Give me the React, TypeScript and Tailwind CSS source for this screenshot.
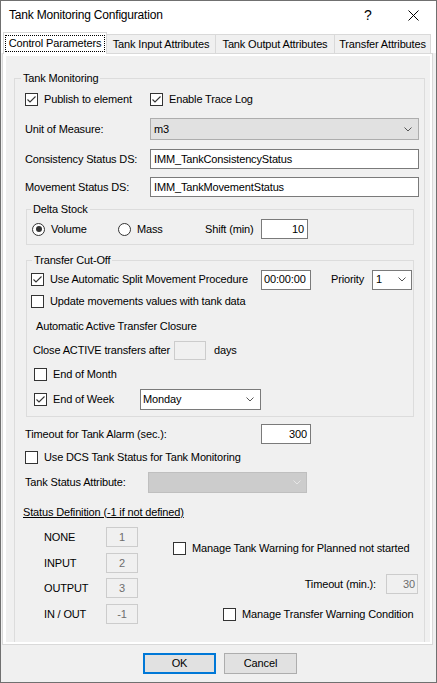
import type { ReactNode } from 'react'

type BoxProps = { checked?: boolean }

function CheckBox({ checked = false }: BoxProps) {
  return (
    <span className="flex h-[13px] w-[13px] shrink-0 items-center justify-center border border-[#333333] bg-white">
      {checked && (
        <svg width="11" height="11" viewBox="0 0 11 11" fill="none">
          <polyline points="1.5,5.5 4,8 9.5,2.5" stroke="#333333" strokeWidth="1.1" />
        </svg>
      )}
    </span>
  )
}

function RadioButton({ checked = false }: BoxProps) {
  return (
    <span className="flex h-[13px] w-[13px] shrink-0 items-center justify-center rounded-full border border-[#333333] bg-white">
      {checked && <span className="h-[6px] w-[6px] rounded-full bg-[#333333]" />}
    </span>
  )
}

function Chevron({ color = '#555555' }: { color?: string }) {
  return (
    <svg width="8" height="5" viewBox="0 0 8 5" fill="none">
      <polyline points="0.5,0.5 4,4 7.5,0.5" stroke={color} strokeWidth="1" />
    </svg>
  )
}

function Tab({ width, children }: { width: string; children: ReactNode }) {
  return (
    <div
      className={`-ml-px flex h-[19px] items-center justify-center border border-b-0 border-[#d9d9d9] bg-[#f0f0f0] ${width}`}
    >
      {children}
    </div>
  )
}

// disabled value boxes of the status definition block
function StatusRow({ label, value, top }: { label: string; value: string; top: string }) {
  return (
    <div className={`flex h-[20px] items-center ${top}`}>
      <span className="ml-[19px] w-[62px]">{label}</span>
      <div className="flex h-[20px] w-[32px] items-center justify-center border border-[#cccccc] bg-[#f0f0f0] text-[#6d6d6d]">
        {value}
      </div>
    </div>
  )
}

export default function App() {
  return (
    <div className="flex h-[683px] w-[437px] flex-col overflow-hidden border border-[#707070] bg-[#f0f0f0] font-['Liberation_Sans',Arial,sans-serif] text-[11px] leading-[13px] tracking-[-0.15px] text-black">
      {/* title bar */}
      <div className="flex h-[29px] shrink-0 items-center bg-white">
        <span className="pl-[8px] text-[12px] leading-[15px] tracking-[-0.2px]">Tank Monitoring Configuration</span>
        <span className="ml-auto flex h-full w-[46px] items-center justify-center text-[14px] tracking-normal">?</span>
        <span className="flex h-full w-[45px] items-center justify-center">
          <svg width="11" height="11" viewBox="0 0 11 11" fill="none">
            <path d="M0.5 0.5L10.5 10.5M10.5 0.5L0.5 10.5" stroke="#000000" strokeWidth="1" />
          </svg>
        </span>
      </div>

      {/* tabs */}
      <div className="flex h-[23px] shrink-0 items-end bg-white pl-[2px]">
        <div className="relative z-10 -mb-px flex h-[22px] w-[104px] border border-b-0 border-[#d9d9d9] bg-white px-[1px] py-[2px]">
          <div className="flex flex-1 items-center justify-center border border-dotted border-black">Control Parameters</div>
        </div>
        <Tab width="w-[110px]">Tank Input Attributes</Tab>
        <Tab width="w-[120px]">Tank Output Attributes</Tab>
        <Tab width="w-[97px]">Transfer Attributes</Tab>
      </div>

      {/* tab page */}
      <div className="ml-px h-[592px] w-[431px] shrink-0 border border-[#d9d9d9]">
        <div className="h-full overflow-hidden border-y-2 border-l-[3px] border-r-2 border-white bg-[#f0f0f0]">
          <fieldset className="ml-[8px] mt-[16px] w-[411px] border border-[#dcdcdc] pb-[30px]">
            <legend className="ml-[6px] px-[2px] leading-[13px]">Tank Monitoring</legend>
            <div className="pl-[10px]">
              <div className="mt-[8px] flex h-[13px] items-center">
                <div className="flex w-[125px] items-center gap-[6px]">
                  <CheckBox checked />
                  <span>Publish to element</span>
                </div>
                <div className="flex items-center gap-[6px]">
                  <CheckBox checked />
                  <span>Enable Trace Log</span>
                </div>
              </div>

              <div className="mt-[12px] flex h-[22px] items-center">
                <span className="w-[125px]">Unit of Measure:</span>
                <div className="flex h-[22px] w-[269px] items-center justify-between border border-[#adadad] bg-[#e1e1e1] pl-[3px] pr-[6px]">
                  <span>m3</span>
                  <Chevron />
                </div>
              </div>

              <div className="mt-[9px] flex h-[20px] items-center">
                <span className="w-[125px]">Consistency Status DS:</span>
                <div className="flex h-[20px] w-[269px] items-center border border-[#7a7a7a] bg-white pl-[3px]">
                  IMM_TankConsistencyStatus
                </div>
              </div>

              <div className="mt-[8px] flex h-[20px] items-center">
                <span className="w-[125px]">Movement Status DS:</span>
                <div className="flex h-[20px] w-[269px] items-center border border-[#7a7a7a] bg-white pl-[3px]">
                  IMM_TankMovementStatus
                </div>
              </div>

              <fieldset className="ml-px mt-[6px] w-[388px] border border-[#dcdcdc] pb-[5px]">
                <legend className="ml-[4px] px-[2px] leading-[13px]">Delta Stock</legend>
                <div className="mt-[3px] flex h-[20px] items-center pl-[5px]">
                  <div className="flex w-[86px] items-center gap-[6px]">
                    <RadioButton checked />
                    <span>Volume</span>
                  </div>
                  <div className="flex w-[87px] items-center gap-[6px]">
                    <RadioButton />
                    <span>Mass</span>
                  </div>
                  <span className="w-[56px]">Shift (min)</span>
                  <div className="flex h-[20px] w-[47px] items-center justify-end border border-[#7a7a7a] bg-white pr-[3px]">
                    10
                  </div>
                </div>
              </fieldset>

              <fieldset className="ml-px mt-[9px] w-[388px] border border-[#dcdcdc] pb-[6px]">
                <legend className="ml-[5px] px-[2px] leading-[13px]">Transfer Cut-Off</legend>
                <div className="pl-[4px]">
                  <div className="mt-[2px] flex h-[21px] items-center">
                    <div className="flex w-[230px] items-center gap-[6px]">
                      <CheckBox checked />
                      <span>Use Automatic Split Movement Procedure</span>
                    </div>
                    <div className="flex h-[20px] w-[50px] items-center border border-[#7a7a7a] bg-white pl-[2px]">
                      00:00:00
                    </div>
                    <span className="ml-[20px] w-[41px]">Priority</span>
                    <div className="flex h-[20px] w-[40px] items-center justify-between border border-[#7a7a7a] bg-white pl-[3px] pr-[5px]">
                      <span>1</span>
                      <Chevron />
                    </div>
                  </div>

                  <div className="mt-[5px] flex h-[13px] items-center gap-[6px]">
                    <CheckBox />
                    <span>Update movements values with tank data</span>
                  </div>

                  <div className="ml-[5px] mt-[12px] flex h-[13px] items-center">Automatic Active Transfer Closure</div>

                  <div className="ml-[2px] mt-[8px] flex h-[19px] items-center">
                    <span className="w-[141px]">Close ACTIVE transfers after</span>
                    <div className="h-[19px] w-[32px] border border-[#cccccc] bg-[#f0f0f0]" />
                    <span className="ml-[8px]">days</span>
                  </div>

                  <div className="ml-[3px] mt-[8px] flex h-[13px] items-center gap-[6px]">
                    <CheckBox />
                    <span>End of Month</span>
                  </div>

                  <div className="ml-[3px] mt-[8px] flex h-[21px] items-center">
                    <div className="flex w-[106px] items-center gap-[6px]">
                      <CheckBox checked />
                      <span>End of Week</span>
                    </div>
                    <div className="flex h-[21px] w-[121px] items-center justify-between border border-[#7a7a7a] bg-white pl-[2px] pr-[6px]">
                      <span>Monday</span>
                      <Chevron />
                    </div>
                  </div>
                </div>
              </fieldset>

              <div className="mt-[7px] flex h-[20px] items-center">
                <span className="w-[236px]">Timeout for Tank Alarm (sec.):</span>
                <div className="flex h-[20px] w-[50px] items-center justify-end border border-[#7a7a7a] bg-white pr-[3px]">
                  300
                </div>
              </div>

              <div className="mt-[7px] flex h-[13px] items-center gap-[6px]">
                <CheckBox />
                <span>Use DCS Tank Status for Tank Monitoring</span>
              </div>

              <div className="mt-[8px] flex h-[21px] items-center">
                <span className="w-[123px]">Tank Status Attribute:</span>
                <div className="flex h-[21px] w-[159px] items-center justify-end border border-[#bfbfbf] bg-[#cccccc] pr-[5px]">
                  <Chevron color="#e6e6e6" />
                </div>
              </div>

              <div className="-ml-[2px] mt-[12px] flex h-[14px] items-center">
                <span className="underline">Status Definition (-1 if not defined)</span>
              </div>

              <div className="mt-[8px] flex">
                <div className="w-[113px]">
                  <StatusRow label="NONE" value="1" top="" />
                  <StatusRow label="INPUT" value="2" top="mt-[6px]" />
                  <StatusRow label="OUTPUT" value="3" top="mt-[5px]" />
                  <StatusRow label="IN / OUT" value="-1" top="mt-[6px]" />
                </div>
                <div className="flex w-[280px] flex-col">
                  <div className="ml-[35px] mt-[15px] flex h-[13px] items-center gap-[6px]">
                    <CheckBox />
                    <span>Manage Tank Warning for Planned not started</span>
                  </div>
                  <div className="mt-[19px] flex h-[20px] items-center justify-end">
                    <span>Timeout (min.):</span>
                    <div className="ml-[10px] flex h-[20px] w-[32px] items-center justify-end border border-[#cccccc] bg-[#f0f0f0] pr-[2px] text-[#6d6d6d]">
                      30
                    </div>
                  </div>
                  <div className="ml-[85px] mt-[14px] flex h-[13px] items-center gap-[6px]">
                    <CheckBox />
                    <span>Manage Transfer Warning Condition</span>
                  </div>
                </div>
              </div>
            </div>
          </fieldset>
        </div>
      </div>

      {/* dialog buttons */}
      <div className="mt-[8px] flex pl-[142px]">
        <button className="flex h-[21px] w-[73px] items-center justify-center border-2 border-[#0078d7] bg-[#e1e1e1]">OK</button>
        <button className="ml-[8px] flex h-[21px] w-[73px] items-center justify-center border border-[#adadad] bg-[#e1e1e1]">
          Cancel
        </button>
      </div>
    </div>
  )
}
